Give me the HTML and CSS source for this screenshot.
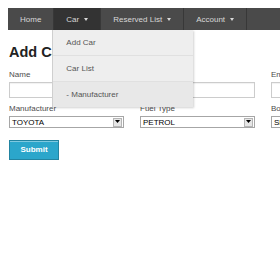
FILE: index.html
```html
<!DOCTYPE html>
<html>
<head>
<meta charset="utf-8">
<link rel="stylesheet" href="styles.css">
</head>
<body>
<nav class="topbar">
  <ul class="menu">
    <li class="item"><a>Home</a></li>
    <li class="item active has-dd"><a>Car <span class="caret"></span></a>
      <ul class="dropdown">
        <li class="dd-item">Add Car</li>
        <li class="dd-item">Car List</li>
        <li class="dd-item hover">- Manufacturer</li>
      </ul>
    </li>
    <li class="item"><a>Reserved List <span class="caret"></span></a></li>
    <li class="item"><a>Account <span class="caret"></span></a></li>
  </ul>
</nav>
<main class="content">
  <h1 class="title">Add Car</h1>
  <form class="form">
    <div class="field span2">
      <label class="lbl">Name</label>
      <div class="input"></div>
    </div>
    <div class="field">
      <label class="lbl">Email</label>
      <div class="input"></div>
    </div>
    <div class="field">
      <label class="lbl">Manufacturer</label>
      <div class="select"><span class="val">TOYOTA</span><span class="arrow"><svg width="5" height="4" viewBox="0 0 5 4"><path d="M0 0H5L2.5 3Z" fill="#000"/></svg></span></div>
    </div>
    <div class="field">
      <label class="lbl">Fuel Type</label>
      <div class="select"><span class="val">PETROL</span><span class="arrow"><svg width="5" height="4" viewBox="0 0 5 4"><path d="M0 0H5L2.5 3Z" fill="#000"/></svg></span></div>
    </div>
    <div class="field">
      <label class="lbl">Body Type</label>
      <div class="select"><span class="val">SEDAN</span><span class="arrow"><svg width="5" height="4" viewBox="0 0 5 4"><path d="M0 0H5L2.5 3Z" fill="#000"/></svg></span></div>
    </div>
    <div class="actions">
      <button type="button" class="btn">Submit</button>
    </div>
  </form>
</main>
</body>
</html>
```
FILE: styles.css
```css
html, body {
  margin: 0;
  padding: 0;
  background: #fff;
  overflow: hidden;
  width: 280px;
  height: 280px;
}
body {
  font-family: "Liberation Sans", Arial, sans-serif;
  color: #4d4d4d;
}
.topbar {
  margin: 8px 0 0 8px;
  height: 22px;
  background: #4a4a4a;
  width: 400px;
  position: relative;
  z-index: 5;
}
.menu {
  list-style: none;
  margin: 0;
  padding: 0;
  display: flex;
  height: 22px;
}
.item {
  position: relative;
  border-right: 1px solid #383838;
  display: flex;
}
.item a {
  display: flex;
  align-items: center;
  padding: 0 12px;
  font-size: 8px;
  color: #d8d8d8;
}
.item.active {
  background: #333;
}
.caret {
  display: inline-block;
  width: 0;
  height: 0;
  margin-left: 5px;
  border-left: 2.5px solid transparent;
  border-right: 2.5px solid transparent;
  border-top: 3px solid #d8d8d8;
}
.dropdown {
  position: absolute;
  left: -1px;
  top: 22px;
  width: 140px;
  margin: 0;
  padding: 0;
  list-style: none;
  background: #eee;
  box-shadow: -1px 0 0 #cfcfcf, 1px 1px 2px rgba(0,0,0,0.18);
}
.dd-item {
  height: 25px;
  line-height: 25px;
  padding-left: 13px;
  font-size: 8px;
  color: #555;
  border-bottom: 1px solid #e0e0e0;
}
.dd-item:last-child { border-bottom: none; }
.dd-item.hover {
  background: #e8e8e8;
}
.content {
  padding-left: 9px;
}
.title {
  margin: 14px 0 0 0;
  font-size: 14.5px;
  line-height: 17px;
  font-weight: bold;
  color: #222;
}
.form {
  display: grid;
  grid-template-columns: 115px 115px 115px;
  column-gap: 16px;
  margin-top: 9px;
}
.span2 { grid-column: span 2; }
.field {
  display: flex;
  flex-direction: column;
}
.lbl {
  font-size: 8px;
  line-height: 10px;
  color: #4d4d4d;
  white-space: nowrap;
}
.input {
  margin-top: 2px;
  height: 14px;
  border: 1px solid #ccc;
  background: #fff;
  box-shadow: inset 0 1px 1px rgba(0,0,0,0.06);
  margin-bottom: 6px;
}
.select {
  margin-top: 2px;
  height: 10px;
  border: 1px solid #a6a6a6;
  background: #fff;
  display: flex;
  align-items: center;
  justify-content: space-between;
}
.val {
  font-size: 8px;
  color: #000;
  padding-left: 2px;
}
.arrow {
  width: 9px;
  height: 9px;
  margin-right: 1px;
  background: #e6e6e6;
  border: 1px solid #b5b5b5;
  box-sizing: border-box;
  display: flex;
  align-items: center;
  justify-content: center;
}
.actions {
  grid-column: 1 / -1;
  margin-top: 10px;
}
.btn {
  width: 50px;
  height: 20px;
  background: #2ba6cb;
  border: 1px solid #2284a1;
  color: #fff;
  font-family: "Liberation Sans", Arial, sans-serif;
  font-weight: bold;
  font-size: 8px;
  padding: 0;
  box-shadow: inset 0 1px 0 rgba(255,255,255,0.4);
}
```
